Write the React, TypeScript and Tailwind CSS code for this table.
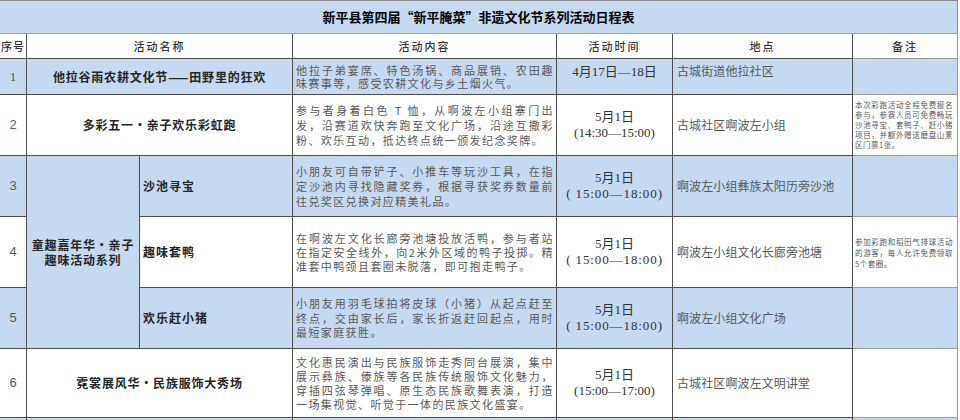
import React from 'react'

const BLUE = 'bg-[#c5d9f1]'
const CELL = 'border-r border-b border-[#4d4d4d]'
const NOTE_CELL = 'border-r border-b border-[#9a9a9a]'

type Row = {
    no: string
    serifNo?: boolean
    name?: string
    sub?: string
    blue: boolean
    content: string[]
    lh: string
    date: string
    time?: string
    spaced?: boolean
    place: string
    note?: string[]
    noteLh?: string
}

const rows: Row[] = [
    {
        no: '1', serifNo: true, name: '他拉谷雨农耕文化节——田野里的狂欢', blue: true,
        content: ['他拉子弟宴席、特色汤锅、商品展销、农田趣', '味赛事等，感受农耕文化与乡土烟火气。'],
        lh: 'leading-[13px]', date: '4月17日—18日', place: '古城街道他拉社区',
    },
    {
        no: '2', name: '多彩五一·亲子欢乐彩虹跑', blue: false,
        content: ['参与者身着白色 T 恤，从啊波左小组寨门出', '发，沿赛道欢快奔跑至文化广场，沿途互撒彩', '粉、欢乐互动，抵达终点统一颁发纪念奖牌。'],
        lh: 'leading-[15px]', date: '5月1日', time: '(14:30—15:00)', place: '古城社区啊波左小组',
        note: ['本次彩跑活动全程免费报名', '参与，参赛人员可免费畅玩', '沙池寻宝、套鸭子、赶小猪', '项目，并额外赠送磨盘山景', '区门票1张。'],
        noteLh: 'leading-[10px]',
    },
    {
        no: '3', sub: '沙池寻宝', blue: true,
        content: ['小朋友可自带铲子、小推车等玩沙工具，在指', '定沙池内寻找隐藏奖券，根据寻获奖券数量前', '往兑奖区兑换对应精美礼品。'],
        lh: 'leading-[15px]', date: '5月1日', time: '( 15:00—18:00)', spaced: true, place: '啊波左小组彝族太阳历旁沙池',
    },
    {
        no: '4', sub: '趣味套鸭', blue: false,
        content: ['在啊波左文化长廊旁池塘投放活鸭，参与者站', '在指定安全线外，向2米外区域的鸭子投掷。精', '准套中鸭颈且套圈未脱落，即可抱走鸭子。'],
        lh: 'leading-[14px]', date: '5月1日', time: '( 15:00—18:00)', spaced: true, place: '啊波左小组文化长廊旁池塘',
        note: ['参加彩跑和稻田气排球活动', '的游客，每人允许免费领取', '5个套圈。'],
        noteLh: 'leading-[11px]',
    },
    {
        no: '5', sub: '欢乐赶小猪', blue: true,
        content: ['小朋友用羽毛球拍将皮球（小猪）从起点赶至', '终点，交由家长后，家长折返赶回起点，用时', '最短家庭获胜。'],
        lh: 'leading-[14.5px]', date: '5月1日', time: '( 15:00—18:00)', spaced: true, place: '啊波左小组文化广场',
    },
    {
        no: '6', name: '霓裳展风华·民族服饰大秀场', blue: false,
        content: ['文化惠民演出与民族服饰走秀同台展演，集中', '展示彝族、傣族等各民族传统服饰文化魅力，', '穿插四弦琴弹唱、原生态民族歌舞表演，打造', '一场集视觉、听觉于一体的民族文化盛宴。'],
        lh: 'leading-[14px]', date: '5月1日', time: '(15:00—17:00)', place: '古城社区啊波左文明讲堂',
    },
]

function Lines({ lines }: { lines: string[] }) {
    return (
        <>
            {lines.map((l, i) => (
                <div key={i} className={i < lines.length - 1 ? 'text-justify [text-align-last:justify]' : ''}>
                    {l}
                </div>
            ))}
        </>
    )
}

export default function App() {
    return (
        <div className="h-[420px] w-[960px] overflow-hidden bg-white [font-family:'Noto_Sans_CJK_SC','Liberation_Sans',sans-serif]">
            <div className="grid grid-cols-[27px_113px_153px_264px_116px_180px_105px] grid-rows-[34px_25px_36px_61px_61px_71px_61px_69px_40px]">
                {/* title */}
                <div className={`col-span-7 flex items-center justify-center border-t border-b border-[#8c8c8c] border-b-[#a0a0a0] border-r ${BLUE} text-[13px] font-bold text-black`}>
                    新平县第四届“新平腌菜”非遗文化节系列活动日程表
                </div>

                {/* header */}
                <div className={`${CELL} flex items-center justify-center text-[11px] font-medium tracking-[1px] text-[#333]`}>序号</div>
                <div className={`${CELL} col-span-2 flex items-center justify-center text-[11px] font-medium tracking-[2px] text-[#333]`}>活动名称</div>
                <div className={`${CELL} flex items-center justify-center text-[11px] font-medium tracking-[2px] text-[#333]`}>活动内容</div>
                <div className={`${CELL} flex items-center justify-center text-[11px] font-medium tracking-[2px] text-[#333]`}>活动时间</div>
                <div className={`${CELL} flex items-center justify-center text-[11px] font-medium tracking-[2px] text-[#333]`}>地点</div>
                <div className={`${NOTE_CELL} flex items-center justify-center text-[11px] font-medium tracking-[2px] text-[#333]`}>备注</div>

                {rows.map((r, idx) => {
                    const bg = r.blue ? BLUE : 'bg-white'
                    return (
                        <React.Fragment key={r.no}>
                            <div
                                className={`${CELL} ${bg} flex items-center justify-center text-[13px] text-[#595959] ${
                                    r.serifNo ? "[font-family:'Liberation_Serif',serif]" : "[font-family:'Liberation_Sans',sans-serif]"
                                }`}
                            >
                                {r.no}
                            </div>

                            {r.name && (
                                <div className={`${CELL} ${bg} col-span-2 flex items-center justify-center text-[12px] font-bold tracking-[0.8px] text-[#262626]`}>
                                    {r.name}
                                </div>
                            )}
                            {idx === 2 && (
                                <div className={`${CELL} ${BLUE} row-span-3 flex flex-col items-center justify-center text-center text-[12px] leading-[15px] font-bold tracking-[0.8px] text-[#262626]`}>
                                    <div>童趣嘉年华·亲子</div>
                                    <div>趣味活动系列</div>
                                </div>
                            )}
                            {r.sub && (
                                <div className={`${CELL} ${bg} flex items-center pl-[3px] text-[12px] font-bold tracking-[1px] text-[#262626]`}>
                                    {r.sub}
                                </div>
                            )}

                            <div className={`${CELL} ${bg} flex flex-col justify-center pl-[3px] pr-[2px] text-[11px] tracking-[1.4px] text-[#595959] ${r.lh}`}>
                                <Lines lines={r.content} />
                            </div>

                            <div
                                className={`${CELL} ${bg} flex flex-col items-center justify-center text-[13px] leading-[16px] text-[#333] [font-family:'Liberation_Serif','Noto_Sans_CJK_SC',serif] ${
                                    r.no === '1' ? 'pb-[10px]' : ''
                                }`}
                            >
                                <div>{r.date}</div>
                                {r.time && <div className={r.spaced ? 'tracking-[0.9px] whitespace-pre' : ''}>{r.time}</div>}
                            </div>

                            <div className={`${CELL} ${bg} flex items-center pl-[4px] text-[12px] tracking-[0.1px] text-[#595959] ${r.no === '1' ? 'pb-[12px]' : ''}`}>
                                {r.place}
                            </div>

                            <div className={`${NOTE_CELL} ${bg} flex flex-col justify-center pl-[2px] pr-[4px] text-[7.5px] tracking-[0.5px] text-[#595959] ${r.noteLh ?? ''}`}>
                                {r.note && <Lines lines={r.note} />}
                            </div>
                        </React.Fragment>
                    )
                })}

                {/* next row, cut off by the window */}
                <div className={`${CELL} ${BLUE}`} />
                <div className={`${CELL} ${BLUE} col-span-2`} />
                <div className={`${CELL} ${BLUE}`} />
                <div className={`${CELL} ${BLUE}`} />
                <div className={`${CELL} ${BLUE}`} />
                <div className={`${NOTE_CELL} ${BLUE}`} />
            </div>
        </div>
    )
}
